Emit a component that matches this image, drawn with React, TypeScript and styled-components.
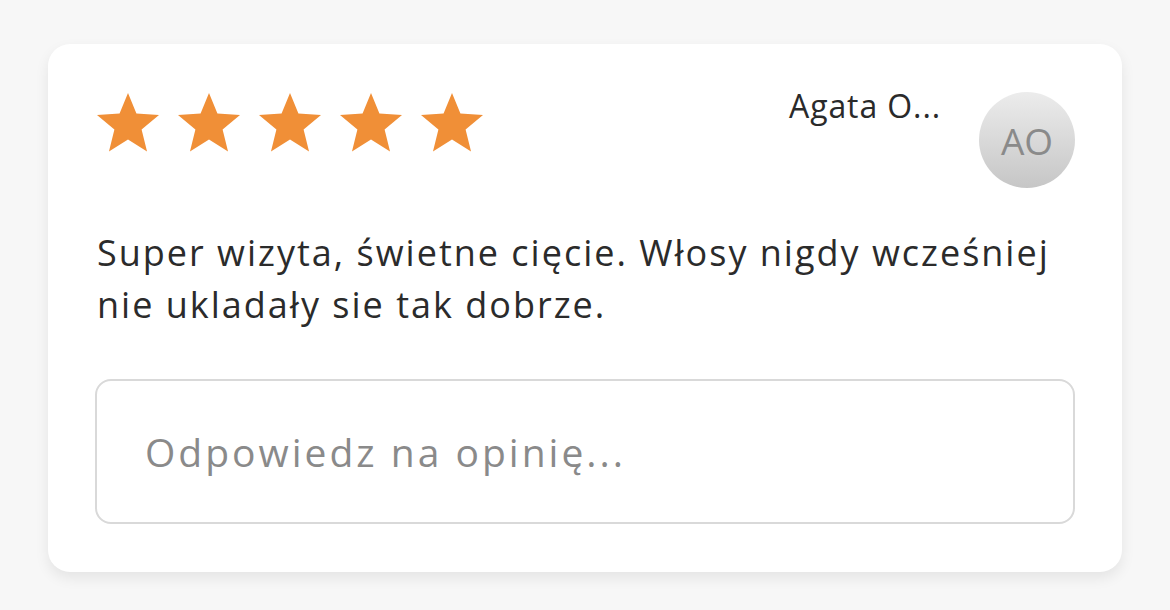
import styled, { createGlobalStyle } from 'styled-components';

const GlobalStyle = createGlobalStyle`
  html, body {
    margin: 0;
    padding: 0;
    background: #f7f7f7;
    font-family: 'Open Sans', 'Noto Sans', sans-serif;
  }
`;

const Star: React.FC = () => (
  <svg width="68" height="62" viewBox="0 0 24 22.8">
    <path
      d="M12 0.4l3.1 7.5 8.3 0.6-6.4 5.3 2 8.1L12 17.5l-7 4.4 2-8.1L0.6 8.5l8.3-0.6z"
      fill="#f08f37"
    />
  </svg>
);

const App: React.FC = () => {
  const rating = 5;
  return (
    <>
      <GlobalStyle />
      <Page>
        <Card>
          <TopRow>
            <Stars>
              {Array.from({ length: rating }).map((_, i) => (
                <Star key={i} />
              ))}
            </Stars>
            <Author>
              <AuthorName>Agata O...</AuthorName>
              <Avatar>AO</Avatar>
            </Author>
          </TopRow>
          <ReviewText>
            Super wizyta, świetne cięcie. Włosy nigdy wcześniej
            <br />
            nie ukladały sie tak dobrze.
          </ReviewText>
          <ReplyBox>
            <ReplyInput placeholder="Odpowiedz na opinię..." />
          </ReplyBox>
        </Card>
      </Page>
    </>
  );
};

const Page = styled.div`
  width: 1170px;
  height: 610px;
  padding: 44px 48px 0 48px;
  box-sizing: border-box;
`;

const Card = styled.div`
  background: #ffffff;
  border-radius: 22px;
  box-shadow: 0 6px 14px rgba(0, 0, 0, 0.08);
  padding: 48px;
  height: 528px;
  box-sizing: border-box;
  display: flex;
  flex-direction: column;
`;

const TopRow = styled.div`
  display: flex;
  justify-content: space-between;
  align-items: flex-start;
  height: 96px;
`;

const Stars = styled.div`
  display: flex;
  gap: 13px;
  margin-left: -2px;
`;

const Author = styled.div`
  display: flex;
  align-items: flex-start;
  gap: 38px;
`;

const AuthorName = styled.div`
  font-size: 32px;
  letter-spacing: 0.9px;
  color: #2a2a2a;
  margin-top: -6px;
  line-height: 40px;
`;

const Avatar = styled.div`
  width: 96px;
  height: 96px;
  border-radius: 50%;
  background: linear-gradient(180deg, #ececec 0%, #c6c6c6 100%);
  color: #8a8a8a;
  font-size: 37px;
  display: flex;
  align-items: center;
  justify-content: center;
  margin-right: -1px;
`;

const ReviewText = styled.p`
  margin: 39px 0 0 1px;
  font-size: 36px;
  line-height: 52px;
  letter-spacing: 2px;
  color: #2b2b2b;
  white-space: nowrap;
`;

const ReplyBox = styled.div`
  margin-top: 48px;
  margin-left: -1px;
  margin-right: -1px;
  height: 145px;
  border: 2px solid #d9d9d9;
  border-radius: 16px;
  box-sizing: border-box;
  display: flex;
  align-items: center;
  padding: 0 48px;
`;

const ReplyInput = styled.input`
  border: none;
  outline: none;
  width: 100%;
  padding: 0;
  font-family: 'Open Sans', 'Noto Sans', sans-serif;
  font-size: 39px;
  letter-spacing: 3px;
  color: #2b2b2b;
  background: transparent;
  &::placeholder {
    color: #8a8a8a;
  }
`;

export default App;
